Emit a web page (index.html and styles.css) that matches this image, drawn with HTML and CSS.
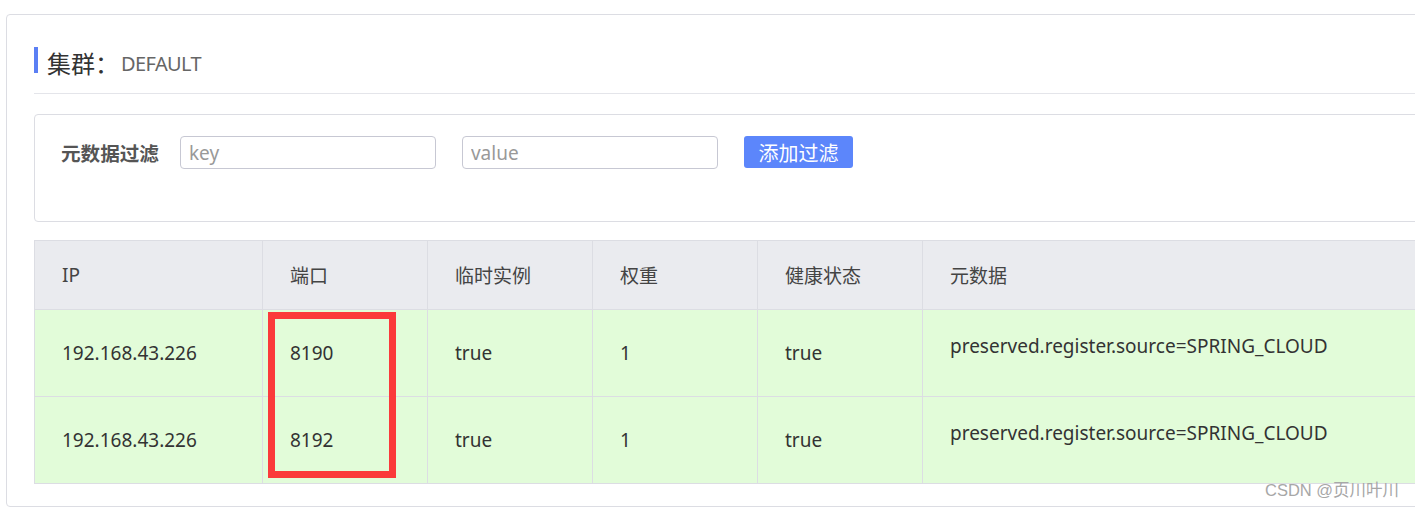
FILE: index.html
```html
<!DOCTYPE html>
<html lang="zh">
<head>
<meta charset="utf-8">
<link rel="stylesheet" href="styles.css">
</head>
<body>
<div class="page">
  <div class="card">
    <div class="title">
      <span class="title-bar"></span>
      <span class="title-main">集群：</span>
      <span class="title-name">DEFAULT</span>
    </div>
    <div class="sep"></div>
    <div class="filter">
      <span class="filter-label">元数据过滤</span>
      <input class="filter-input" type="text" placeholder="key">
      <input class="filter-input" type="text" placeholder="value">
      <button class="btn">添加过滤</button>
    </div>
    <div class="table-wrap">
      <table class="grid">
        <colgroup>
          <col class="c-ip"><col class="c-n"><col class="c-n"><col class="c-n"><col class="c-n"><col>
        </colgroup>
        <thead>
          <tr><th>IP</th><th>端口</th><th>临时实例</th><th>权重</th><th>健康状态</th><th>元数据</th></tr>
        </thead>
        <tbody>
          <tr><td>192.168.43.226</td><td>8190</td><td>true</td><td>1</td><td>true</td><td class="meta">preserved.register.source=SPRING_CLOUD</td></tr>
          <tr><td>192.168.43.226</td><td>8192</td><td>true</td><td>1</td><td>true</td><td class="meta">preserved.register.source=SPRING_CLOUD</td></tr>
        </tbody>
      </table>
      <div class="highlight"></div>
    </div>
  </div>
  <div class="watermark">CSDN @页川叶川</div>
</div>
</body>
</html>
```
FILE: styles.css
```css
html, body {
  margin: 0;
  padding: 0;
  background: #fff;
  overflow: hidden;
}
body {
  font-family: "Noto Sans", "Noto Sans CJK SC", sans-serif;
  color: #333;
}
.page {
  position: relative;
  padding: 14px 0 0 6px;
  height: 493px;
}
.card {
  box-sizing: border-box;
  width: 1600px;
  height: 493px;
  border: 1px solid #dcdde3;
  border-radius: 4px;
  padding: 32px 0 0 27px;
}
.title {
  display: flex;
  align-items: center;
  height: 26px;
}
.title-bar {
  width: 4px;
  height: 26px;
  background: #5b7ff4;
  margin-right: 9px;
}
.title-main {
  font-size: 24px;
  color: #333;
  margin-top: 4px;
}
.title-name {
  font-size: 20px;
  letter-spacing: -0.6px;
  color: #666;
  margin-top: 6px;
  margin-left: 2px;
}
.sep {
  height: 1px;
  background: #e4e5ea;
  margin-top: 20px;
}
.filter {
  box-sizing: border-box;
  margin-top: 20px;
  height: 108px;
  border: 1px solid #dcdde3;
  border-radius: 4px;
  display: flex;
  align-items: flex-start;
  padding: 21px 0 0 26px;
}
.filter-label {
  font-size: 19.6px;
  font-weight: bold;
  color: #555;
  height: 33px;
  line-height: 36px;
  margin-right: 21px;
}
.filter-input {
  box-sizing: border-box;
  width: 256px;
  height: 33px;
  border: 1px solid #c7c8d3;
  border-radius: 4px;
  padding: 0 8px;
  font-family: inherit;
  font-size: 19px;
  margin: 0 26px 0 0;
  outline: none;
}
.filter-input::placeholder {
  color: #999;
}
.btn {
  box-sizing: border-box;
  width: 109px;
  height: 32px;
  border: none;
  border-radius: 3px;
  background: #5c86fb;
  color: #fff;
  font-family: inherit;
  font-size: 20px;
  padding: 0;
  margin: 0;
}
.table-wrap {
  position: relative;
  margin-top: 18px;
}
.grid {
  border-collapse: collapse;
  width: 1500px;
  table-layout: fixed;
  font-size: 19px;
}
.c-ip { width: 228px; }
.c-n { width: 165px; }
.grid th, .grid td {
  border: 1px solid #dcdde3;
  text-align: left;
  padding: 0 0 0 27px;
  font-weight: normal;
  color: #333;
}
.grid th {
  background: #eaebef;
  height: 68px;
  color: #444;
}
.grid td {
  background: #e2fcd9;
  height: 86px;
}
.grid td.meta {
  vertical-align: top;
  padding-top: 23px;
  height: 63px;
}
.highlight {
  position: absolute;
  left: 234px;
  top: 72px;
  width: 128px;
  height: 166px;
  box-sizing: border-box;
  border: 7px solid #fb3a3a;
}
.watermark {
  position: absolute;
  left: 1265px;
  top: 477px;
  font-size: 16.5px;
  color: #a7a7a7;
  font-family: "Liberation Sans", "Noto Sans CJK SC", sans-serif;
}
```
